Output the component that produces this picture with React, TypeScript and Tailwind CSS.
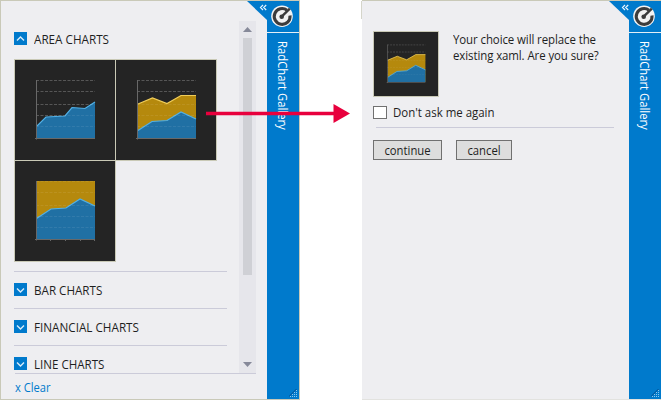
import React from "react";

const AXIS = "#686868";

type Kind = "area" | "stacked" | "full";

const BLUE: Record<Kind, string> = {
  area: "23,67 32,58 51,57 58,48.5 71,49.5 81,43",
  stacked: "23,71.5 37,62.5 52,61.5 66,53 81,60",
  full: "22.5,58.5 37,49 52,48 66,39 81,46",
};

function Grid({ stroke }: { stroke: string }) {
  return (
    <g stroke={stroke} strokeWidth="1" strokeDasharray="3 1.5">
      {[21.5, 32.5, 45.5, 56.5, 67.5].map((y) => (
        <line key={y} x1="22" x2="81" y1={y} y2={y} />
      ))}
    </g>
  );
}

function Chart({ kind }: { kind: Kind }) {
  const gold = "23,45 37.5,39 52,44.5 66,36.5 81,36.5";
  return (
    <svg viewBox="0 0 102 102" className="block h-full w-full">
      <Grid stroke="#474747" />
      {kind === "stacked" && (
        <>
          <polygon points={`23,79 ${gold} 81,79`} fill="#b5890d" />
          <polyline points={gold} fill="none" stroke="#f0cd59" strokeWidth="1.2" />
        </>
      )}
      {kind === "full" && <rect x="22" y="21" width="59" height="58" fill="#b5890d" />}
      <polygon points={`23,79 ${BLUE[kind]} 81,79`} fill="#2070a4" />
      <polyline points={BLUE[kind]} fill="none" stroke="#51b0e6" strokeWidth="1.2" />
      <g opacity="0.08">
        <Grid stroke="#ffffff" />
      </g>
      <path d="M22.5 21V80.5M21 79.5H81" stroke={AXIS} fill="none" />
      {kind === "full" && <path d="M36.5 79v2M51.5 79v2M66.5 79v2M80.5 79v2" stroke={AXIS} />}
    </svg>
  );
}

function Tile({ kind, className }: { kind: Kind; className: string }) {
  return (
    <div className={`relative shrink-0 bg-[#242424] ${className}`}>
      <Chart kind={kind} />
      <div className="absolute inset-0 border border-[#c9c9b6]" />
    </div>
  );
}

function Toggle({ label, open, scale }: { label: string; open?: boolean; scale: string }) {
  return (
    <div className="flex h-[13px] items-center">
      <span className="flex size-[13px] shrink-0 bg-[#007acc]">
        <svg viewBox="0 0 13 13" className="size-[13px]">
          <path
            d={open ? "M3 8.5 6.5 5 10 8.5" : "M3 5.5 6.5 9 10 5.5"}
            fill="none"
            stroke="#d8ecfa"
            strokeWidth="1.4"
          />
        </svg>
      </span>
      <span className={`ml-[7px] mt-[3px] origin-left whitespace-nowrap text-[12px] leading-[16px] ${scale}`}>
        {label}
      </span>
    </div>
  );
}

function Grip() {
  const dots: React.ReactNode[] = [];
  for (let row = 0; row < 4; row++) {
    for (let col = 3 - row; col < 4; col++) {
      dots.push(
        <rect key={`${row}-${col}`} x={col * 2 + 1} y={row * 2 + 1} width="1" height="1" fill="#8cc8ee" />
      );
    }
  }
  return (
    <svg viewBox="0 0 9 9" className="mb-px mr-px h-[9px] w-[9px]">
      <path d="M0 7h1v-1h1v-1h1v-1h1v-1h1v-1h1v-1h1v-1h1" stroke="#005ca4" fill="none" />
      {dots}
    </svg>
  );
}

function SideBar() {
  return (
    <aside className="relative flex h-full w-[32px] shrink-0 flex-col bg-[#007acc]">
      <svg viewBox="0 0 20 19" className="absolute -left-[20px] top-0 h-[19px] w-[20px]">
        <path d="M0 0H20V19Z" fill="#007acc" />
        <path d="M16 4 13.5 6.5 16 9M19.2 4 16.7 6.5 19.2 9" fill="none" stroke="#e9f5ff" strokeWidth="1.2" />
      </svg>
      <svg viewBox="0 0 32 31" className="h-[31px] w-[32px] shrink-0">
        <circle cx="15" cy="15.2" r="10.8" fill="#f3f3f3" />
        <path d="M20 9.2A7.9 7.9 0 1 0 23 14.5" fill="none" stroke="#3c3c3c" strokeWidth="3.1" />
        <path d="M13.6 16.7 22.8 7.6" stroke="#3c3c3c" strokeWidth="2.4" />
        <circle cx="14.7" cy="15.7" r="2.3" fill="#3c3c3c" />
      </svg>
      <div className="h-px shrink-0 bg-[#e4eff6]" />
      <div className="flex w-full justify-center pt-[8px]">
        <span className="mr-[2px] origin-top scale-y-[0.94] whitespace-nowrap text-[12px] leading-[18px] text-white [writing-mode:vertical-rl]">
          RadChart Gallery
        </span>
      </div>
      <div className="mt-auto flex justify-end">
        <Grip />
      </div>
    </aside>
  );
}

function ScrollBar() {
  return (
    <div className="flex h-[352px] w-[17px] flex-col items-center bg-[#e6e6eb]">
      <svg viewBox="0 0 9 17" className="h-[17px] w-[9px]">
        <path d="M0 11 4.5 6 9 11Z" fill="#868999" />
      </svg>
      <div className="h-[237px] w-[9px] bg-[#cfd0d5]" />
      <svg viewBox="0 0 9 5" className="mb-[6px] mt-auto h-[5px] w-[9px]">
        <path d="M0 0H9L4.5 5Z" fill="#868999" />
      </svg>
    </div>
  );
}

function GalleryPanel() {
  return (
    <section className="flex h-[400px] w-[300px] shrink-0 border border-[#c9c9b8] bg-[#eeeef1]">
      <main className="flex w-[266px] shrink-0 flex-col pl-[13px]">
        <div className="flex h-[372px] pt-[20px]">
          <div className="w-[225px] shrink-0 pt-[11px]">
            <Toggle label="AREA CHARTS" open scale="scale-x-[0.975]" />
            <div className="mt-[14px] flex w-[203px] flex-wrap">
              <Tile kind="area" className="size-[102px]" />
              <Tile kind="stacked" className="-ml-px size-[102px]" />
              <Tile kind="full" className="-mt-px size-[102px]" />
            </div>
            <div className="mt-[9px] h-px w-[213px] bg-[#cbcbd9]" />
            <div className="mt-[11px]">
              <Toggle label="BAR CHARTS" scale="scale-x-[0.97]" />
            </div>
            <div className="mt-[12px] h-px w-[213px] bg-[#cbcbd9]" />
            <div className="mt-[11px]">
              <Toggle label="FINANCIAL CHARTS" scale="scale-x-[0.975]" />
            </div>
            <div className="mt-[12px] h-px w-[213px] bg-[#cbcbd9]" />
            <div className="mt-[11px]">
              <Toggle label="LINE CHARTS" scale="scale-x-[0.965]" />
            </div>
          </div>
          <ScrollBar />
        </div>
        <div className="ml-px h-px w-[241px] shrink-0 bg-[#cbcbd9]" />
        <a className="ml-px mt-[6px] origin-left self-start text-[12px] leading-[16px] text-[#007acc] scale-x-[0.93]">
          x Clear
        </a>
      </main>
      <SideBar />
    </section>
  );
}

function ConfirmPanel() {
  return (
    <section className="ml-auto flex h-[400px] w-[299px] shrink-0 border-y border-r border-[#c9c9b8] border-b-[#e2e2df] bg-[#eeeef1]">
      <div className="-ml-px h-[18px] w-px shrink-0 bg-[#d5d5ca]" />
      <main className="w-[267px] shrink-0 pl-[11px] pt-[30px] text-[12px]">
        <div className="flex">
          <Tile kind="stacked" className="size-[66px]" />
          <p className="ml-[14px] mt-px origin-left scale-x-[0.955] whitespace-nowrap leading-[16px] tracking-[-0.1px]">
            Your choice will replace the
            <br />
            existing xaml. Are you sure?
          </p>
        </div>
        <label className="mt-[9px] flex h-[13px] items-center">
          <span className="h-[13px] w-[14px] border border-[#707070] bg-white" />
          <span className="ml-[6px] mt-px origin-left scale-x-[0.955] whitespace-nowrap leading-[16px]">
            Don't ask me again
          </span>
        </label>
        <div className="ml-[3px] mt-[8px] h-px w-[238px] bg-[#cbcbd9]" />
        <div className="mt-[12px] flex gap-[14px] leading-[20px]">
          <button className="h-[20px] w-[69px] border border-[#707070] bg-[#dddddd]">
            <span className="block scale-x-[0.94]">continue</span>
          </button>
          <button className="h-[20px] w-[56px] border border-[#707070] bg-[#dddddd]">
            <span className="block scale-x-[0.94]">cancel</span>
          </button>
        </div>
      </main>
      <SideBar />
    </section>
  );
}

export default function App() {
  return (
    <div className="relative flex h-[400px] w-[661px] overflow-hidden bg-white font-['Open_Sans','Noto_Sans',sans-serif] text-[#1e1e1e]">
      <GalleryPanel />
      <ConfirmPanel />
      <svg viewBox="0 0 144 20" className="absolute left-[206px] top-[104px] h-[20px] w-[144px]">
        <path d="M0 9.5H129" stroke="#e8003d" strokeWidth="3.6" />
        <path d="M127.5 0 144 9.5 127.5 19Z" fill="#e8003d" />
      </svg>
    </div>
  );
}
